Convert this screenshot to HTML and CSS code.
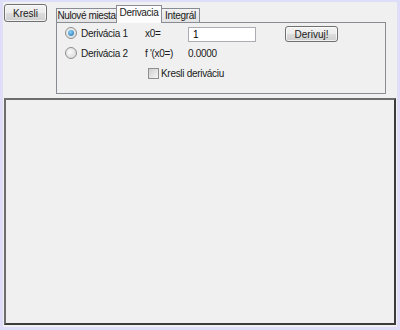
FILE: index.html
```html
<!DOCTYPE html>
<html lang="sk">
<head>
  <meta charset="UTF-8" />
  <title>Derivacia</title>
  <link rel="stylesheet" href="styles.css">
</head>
<body>
  <div class="frame">
    <div class="top-row">
      <button class="btn btn-kresli">Kresli</button>

      <div class="tabs">
        <div class="tab-bar">
          <div class="tab tab-nul">Nulové miesta</div>
          <div class="tab tab-der active">Derivacia</div>
          <div class="tab tab-int">Integrál</div>
        </div>
        <div class="tab-panel">
          <label class="radio checked"><span class="dot"></span>Derivácia 1</label>
          <span class="lbl">x0=</span>
          <input class="field" type="text" value="1">
          <button class="btn btn-deriv">Derivuj!</button>

          <label class="radio"><span class="dot"></span>Derivácia 2</label>
          <span class="lbl">f '(x0=)</span>
          <span class="lbl">0.0000</span>
          <span></span>

          <span></span>
          <label class="check"><span class="box"></span>Kresli deriváciu</label>
        </div>
      </div>
    </div>

    <div class="canvas"></div>
  </div>
</body>
</html>
```

FILE: styles.css
```css
/* ===== Reset ===== */
*, *::before, *::after { margin:0; padding:0; box-sizing:border-box; }
body {
  font-family:'Liberation Sans', Arial, sans-serif;
  font-size:10px; letter-spacing:-0.3px; color:#1a1a1a;
  background:#dedefa;
  white-space:nowrap;
}

/* ===== Window ===== */
.frame {
  width:400px; height:330px;
  border:3px solid #dedefa; border-top-width:2px;
  background:#f0f0f0;
  padding:2px 1px;
  display:flex; flex-direction:column;
}
.top-row { display:flex; align-items:flex-start; }

/* ===== Buttons ===== */
.btn {
  font:inherit; color:#1a1a1a;
  border:1px solid #707070; border-radius:3px;
  background:linear-gradient(#f2f2f2 0%, #ebebeb 50%, #dddddd 51%, #cfcfcf 100%);
  box-shadow:inset 0 0 0 1px rgba(255,255,255,0.7);
}
.btn-kresli { width:43px; height:18px; }
.btn-deriv { width:53px; height:16px; margin-top:2px; }

/* ===== Tabs ===== */
.tabs { margin-left:9px; width:330px; }
.tab-bar { display:flex; align-items:flex-end; height:18px; }
.tab {
  height:14px; line-height:13px; text-align:center;
  border:1px solid #898c95; border-bottom:none;
  background:linear-gradient(#f2f2f2, #e3e3e3);
  margin-right:-1px; flex:none; overflow:hidden;
}
.tab-nul { width:61px; letter-spacing:-0.4px; }
.tab-der { width:46px; }
.tab-int { width:39px; }
.tab.active {
  height:18px; line-height:14px;
  background:#fcfcfc; position:relative; z-index:1;
  margin-bottom:-1px;
}
.tab-panel {
  height:72px;
  border:1px solid #898c95;
  background:#f0f0f0;
  padding:0 0 0 8px;
  display:grid;
  grid-template-columns:80px 43px 97px auto;
  grid-template-rows:20px 20px 20px;
  align-items:center;
}

/* ===== Controls ===== */
.radio, .check { display:flex; align-items:center; }
.radio .dot {
  width:12px; height:12px; border-radius:50%;
  border:1px solid #8e8f8f;
  background:radial-gradient(circle at 40% 40%, #fafafa, #d4d4d4);
  margin-right:4px; position:relative;
}
.radio.checked .dot::after {
  content:''; position:absolute; left:2px; top:2px;
  width:6px; height:6px; border-radius:50%;
  background:radial-gradient(circle at 40% 35%, #8ad3f7, #1c6fb1);
}
.field {
  width:68px; height:15px; margin-top:2px;
  font:inherit; padding:0 4px;
  border:1px solid #abadb3; background:#fff;
}
.check { grid-column:2 / span 3; margin-left:3px; }
.check .box {
  width:11px; height:11px; margin-right:2px;
  border:1px solid #8e8f8f;
  background:linear-gradient(135deg, #cfcfcf, #f6f6f6);
}

/* ===== Plot area ===== */
.canvas {
  margin-top:4px; flex:1;
  background:#f0f0f0;
  border-top:2px solid #6d6d6d; border-left:2px solid #6d6d6d;
  border-right:2px solid #3c3c3c; border-bottom:2px solid #3c3c3c;
}
```
